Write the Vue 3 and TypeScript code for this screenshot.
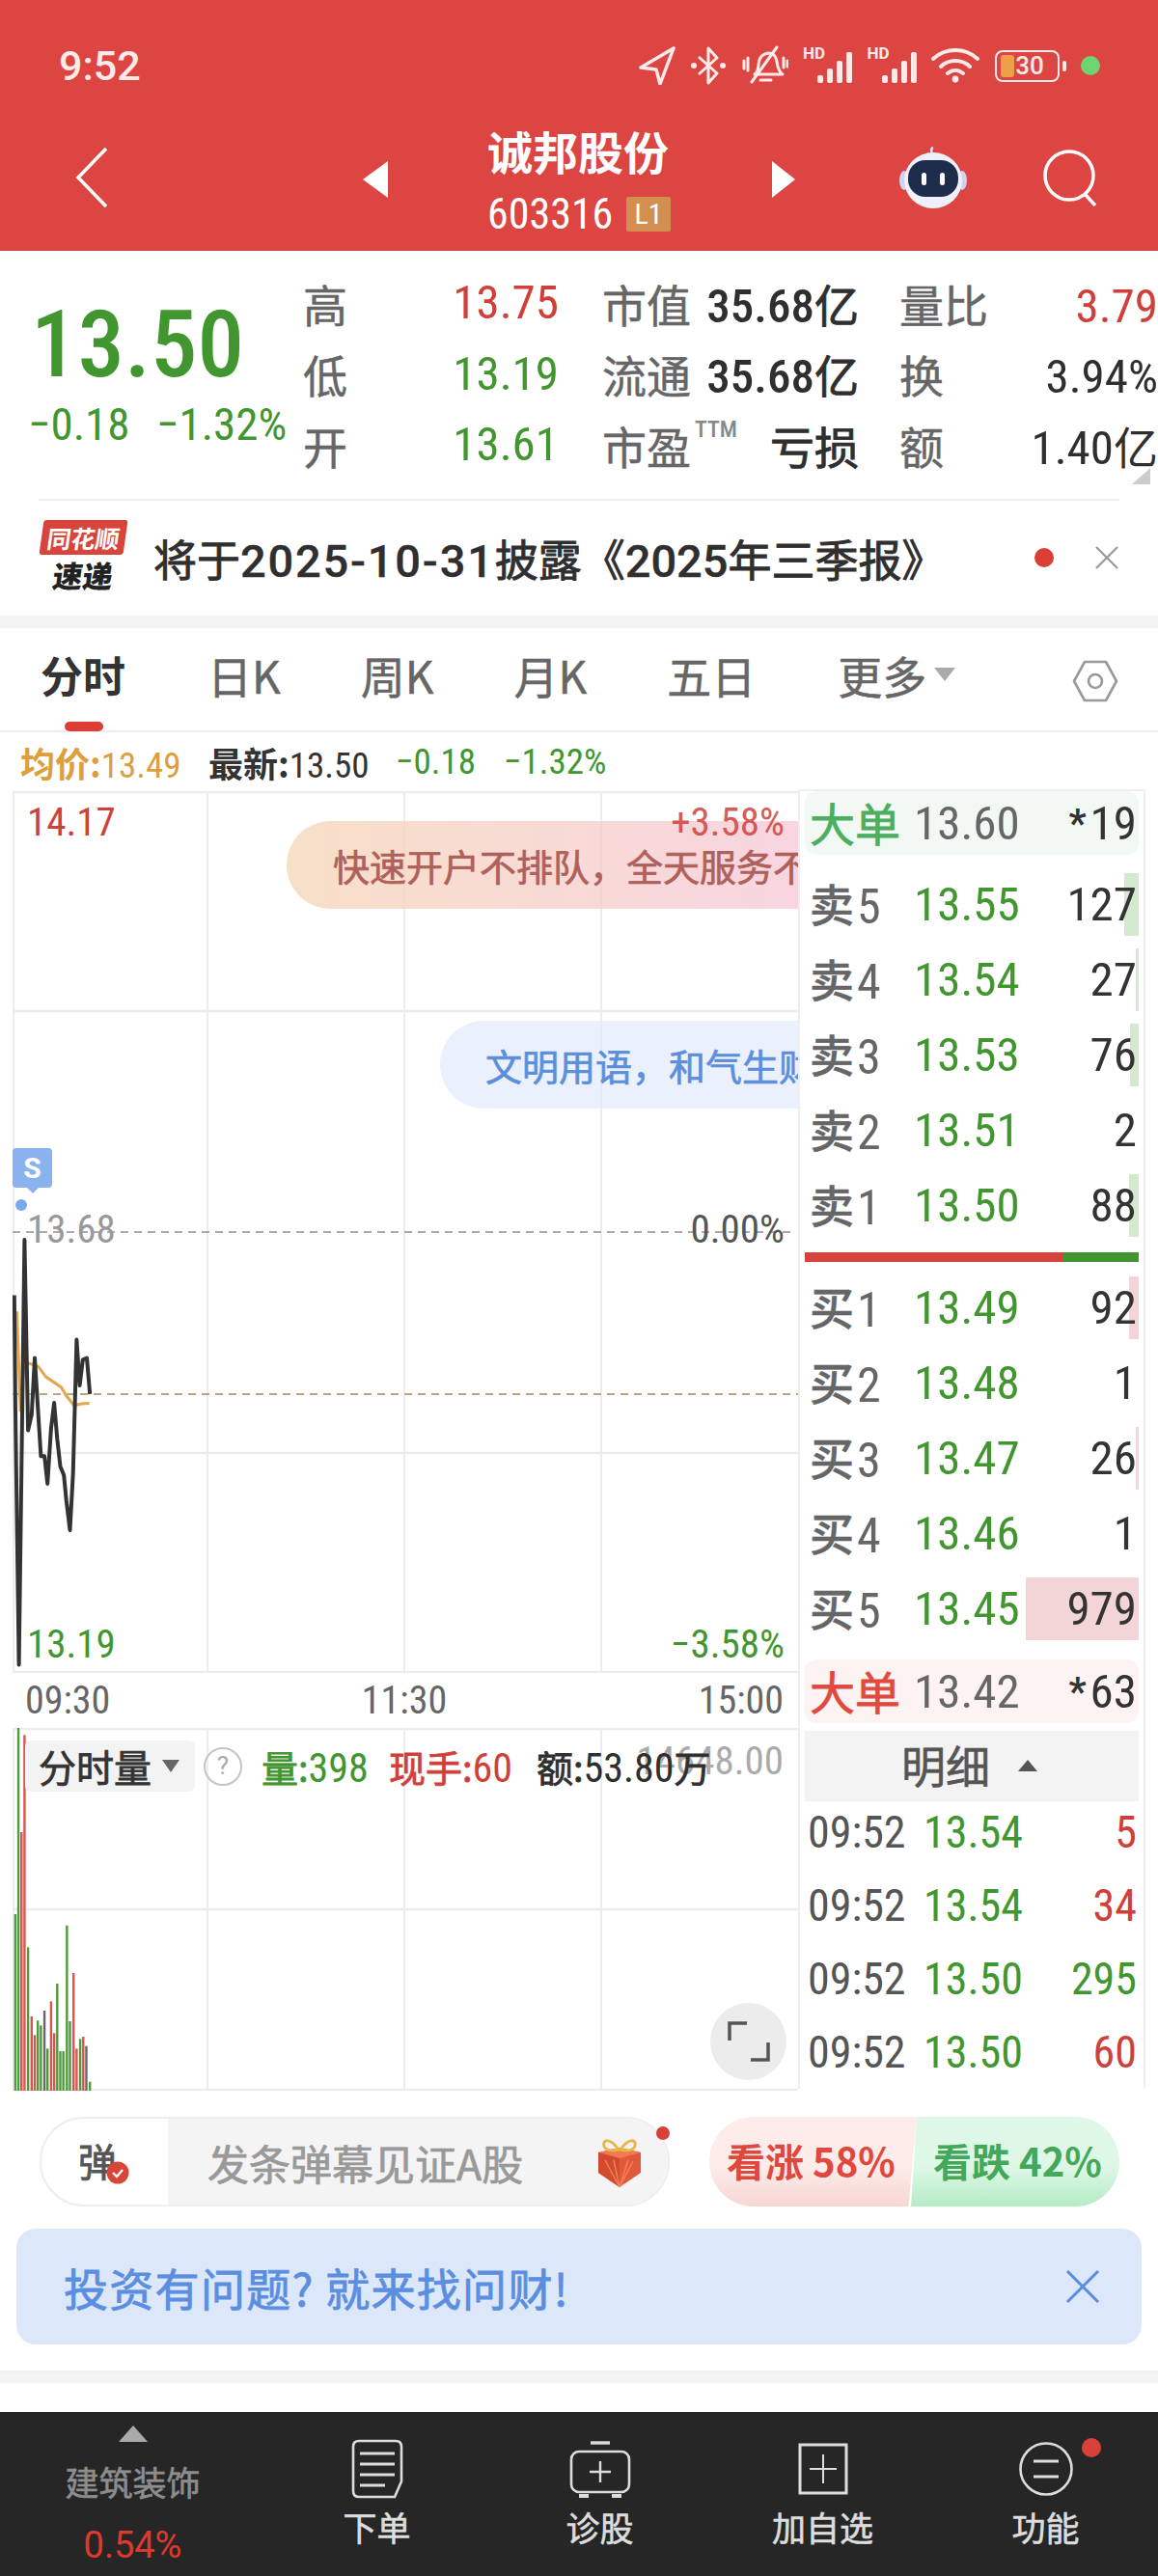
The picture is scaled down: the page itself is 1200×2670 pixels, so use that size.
<script setup lang="ts">
type Pt = [number, number]

const tabs = ['日K', '周K', '月K', '五日']

const stats = [
  { l1: '高', v1: '13.75', c1: 'red', l2: '市值', v2: '35.68', u2: '亿', l3: '量比', v3: '3.79', u3: '', c3: 'red' },
  { l1: '低', v1: '13.19', c1: 'green', l2: '流通', v2: '35.68', u2: '亿', l3: '换', v3: '3.94%', u3: '', c3: 'dark' },
  { l1: '开', v1: '13.61', c1: 'green', l2: '市盈', v2: '', u2: '亏损', l3: '额', v3: '1.40', u3: '亿', c3: 'dark' }
]

const asks = [
  { name: '卖', n: 5, price: '13.55', vol: '127', bar: 15 },
  { name: '卖', n: 4, price: '13.54', vol: '27', bar: 3 },
  { name: '卖', n: 3, price: '13.53', vol: '76', bar: 9 },
  { name: '卖', n: 2, price: '13.51', vol: '2', bar: 0 },
  { name: '卖', n: 1, price: '13.50', vol: '88', bar: 10 }
]
const bids = [
  { name: '买', n: 1, price: '13.49', vol: '92', bar: 10 },
  { name: '买', n: 2, price: '13.48', vol: '1', bar: 0 },
  { name: '买', n: 3, price: '13.47', vol: '26', bar: 3 },
  { name: '买', n: 4, price: '13.46', vol: '1', bar: 0 },
  { name: '买', n: 5, price: '13.45', vol: '979', bar: 117 }
]
const ticks = [
  { time: '09:52', price: '13.54', vol: '5', c: 'red' },
  { time: '09:52', price: '13.54', vol: '34', c: 'red' },
  { time: '09:52', price: '13.50', vol: '295', c: 'green' },
  { time: '09:52', price: '13.50', vol: '60', c: 'red' }
]

// traced from the reference, zoomed crop coordinates
const linePts: Pt[] = [[28,483],[30,800],[37,1555],[48,322],[55,875],[62,830],[68,665],[75,830],[80,950],[87,950],[93,1030],[100,870],[106,795],[112,900],[118,980],[125,1005],[130,1080],[137,1165],[143,1000],[150,612],[156,745],[162,670],[170,665],[176,770]]
const avgPts: Pt[] = [[33,530],[40,820],[46,700],[55,680],[75,690],[90,720],[120,750],[130,775],[145,803],[160,798],[175,797]]
const toPoints = (pts: Pt[]) => pts.map(([x, y]) => `${(x / 1.889).toFixed(1)},${(1170 + y / 2.8).toFixed(1)}`).join(' ')
const priceLine = toPoints(linePts)
const avgLine = toPoints(avgPts)

const bars: { x: number; top: number; c: string }[] = [
  [30,612,'g'],[36,30,'g'],[42,357,'r'],[48,55,'r'],[55,715,'g'],[62,930,'r'],[68,988,'r'],[74,943,'g'],[80,958,'g'],[87,912,'k'],[93,1030,'g'],[100,883,'r'],[106,982,'r'],[112,828,'g'],[118,1038,'g'],[124,1038,'g'],[131,647,'g'],[137,945,'g'],[144,795,'r'],[150,1030,'r'],[157,1000,'g'],[163,993,'r'],[169,1022,'k'],[176,1133,'g']
].map((b) => ({
  x: (b[0] as number) / 1.889,
  top: 1780 + (b[1] as number) / 3,
  c: b[2] === 'g' ? '#4f9a3c' : b[2] === 'r' ? '#d9534f' : '#666'
}))
</script>

<template>
  <div class="page">
    <header class="head">
      <div class="status">
        <span class="clock">9:52</span>
        <div class="status-icons">
          <svg width="38" height="40" viewBox="0 0 38 40"><path d="M36 2 2 22l16 2 4 15z" fill="none" stroke="#ffeaea" stroke-width="3.5" stroke-linejoin="round" /></svg>
          <svg width="38" height="42" viewBox="0 0 38 42"><path d="M9 12 28 29 19 39V3l9 10L9 30" fill="none" stroke="#ffeaea" stroke-width="3" stroke-linejoin="round" /><circle cx="4" cy="21" r="3" fill="#ffeaea" /><circle cx="34" cy="21" r="3" fill="#ffeaea" /></svg>
          <svg width="48" height="42" viewBox="0 0 48 42"><path d="M13 30c5-3 3-9 5-15 2-6 10-9 15-5 3 3 3 7 4 12 1 3 2 6 5 8zM19 36h11M36 2 10 38M2 16v8M6 13v13M43 13v10M47 16v6" fill="none" stroke="#ffeaea" stroke-width="3" stroke-linecap="round" stroke-linejoin="round" /></svg>
          <div class="signal"><span class="hd">HD</span><i style="height:8px" /><i style="height:15px" /><i style="height:23px" /><i style="height:32px" /></div>
          <div class="signal"><span class="hd">HD</span><i style="height:8px" /><i style="height:15px" /><i style="height:23px" /><i style="height:32px" /></div>
          <svg width="50" height="36" viewBox="0 0 50 36"><path d="M2 11c13-12 33-12 46 0M10 19c8-8 22-8 30 0M17 26c5-4 11-4 16 0" fill="none" stroke="#ffeaea" stroke-width="4" stroke-linecap="round" /><circle cx="25" cy="32" r="3.4" fill="#ffeaea" /></svg>
          <div class="battery"><div class="batt-body"><i class="batt-fill" /><span>30</span></div><i class="batt-cap" /></div>
          <i class="green-dot" />
        </div>
      </div>
      <nav class="nav">
        <svg class="back" width="36" height="64" viewBox="0 0 36 64"><path d="M33 2 4 32l29 30" fill="none" stroke="#fff" stroke-width="3.5" /></svg>
        <div class="nav-mid">
          <i class="tri tri-l" />
          <div class="stock">
            <div class="stock-name">诚邦股份</div>
            <div class="stock-code"><span class="num">603316</span><b class="l1">L1</b></div>
          </div>
          <i class="tri tri-r" />
        </div>
        <div class="nav-right">
          <svg width="72" height="66" viewBox="0 0 72 66">
            <path d="M36 10c-2-3-3-7 0-8" fill="none" stroke="#dfe3f7" stroke-width="2.5" />
            <ellipse cx="6" cy="36" rx="5" ry="10" fill="#cfd3f2" />
            <ellipse cx="66" cy="36" rx="5" ry="10" fill="#cfd3f2" />
            <ellipse cx="36" cy="36" rx="30" ry="29" fill="#eef0fb" />
            <rect x="10" y="15" width="52" height="38" rx="18" fill="#1f2d4d" />
            <rect x="24" y="28" width="5" height="13" rx="2.5" fill="#fff" />
            <rect x="43" y="28" width="5" height="13" rx="2.5" fill="#fff" />
          </svg>
          <svg width="60" height="60" viewBox="0 0 60 60"><circle cx="28" cy="28" r="25" fill="none" stroke="#fff" stroke-width="3.5" /><path d="m44 47 11 12" stroke="#fff" stroke-width="3.5" /></svg>
        </div>
      </nav>
    </header>

    <section class="quote">
      <div class="quote-top">
        <div class="last">
          <div class="last-price num">13.50</div>
          <div class="last-chg num"><span class="chg-a">−0.18</span><span>−1.32%</span></div>
        </div>
        <div class="stats">
          <template v-for="row in stats" :key="row.l1">
            <span class="s-label">{{ row.l1 }}</span>
            <span class="s-val num" :class="row.c1">{{ row.v1 }}</span>
            <span class="s-label s-l2">{{ row.l2 }}</span>
            <span class="s-val s-v2"><sup v-if="!row.v2" class="ttm num">TTM</sup><span class="num">{{ row.v2 }}</span>{{ row.u2 }}</span>
            <span class="s-label s-l3">{{ row.l3 }}</span>
            <span class="s-val" :class="row.c3"><span class="num">{{ row.v3 }}</span>{{ row.u3 }}</span>
          </template>
        </div>
        <i class="corner" />
      </div>
      <div class="notice">
        <div class="logo">
          <div class="logo-top">同花顺</div>
          <div class="logo-bot">速递</div>
        </div>
        <div class="notice-text">将于<span class="date">2025-10-31</span>披露《<span>2025</span>年三季报》</div>
        <i class="notice-dot" />
        <svg width="26" height="24" viewBox="0 0 26 24"><path d="m2 1 22 22M24 1 2 23" stroke="#999" stroke-width="2.2" /></svg>
      </div>
    </section>
    <div class="band" />

    <div class="tabs">
      <span class="tab active">分时</span>
      <span v-for="t in tabs" :key="t" class="tab">{{ t }}</span>
      <span class="tab more">更多<i class="more-tri" /></span>
      <svg class="hex" width="48" height="46" viewBox="0 0 48 46"><path d="M13 3h22l11 20-11 20H13L2 23z" fill="none" stroke="#999" stroke-width="2.6" stroke-linejoin="round" /><circle cx="24" cy="23" r="7" fill="none" stroke="#999" stroke-width="2.6" /></svg>
    </div>

    <div class="info num">
      <span class="avg"><b>均价:</b>13.49</span>
      <span class="latest"><b>最新:</b>13.50</span>
      <span class="green">−0.18</span>
      <span class="green">−1.32%</span>
    </div>

    <main class="main">
      <div class="charts">
        <div class="price-chart">
          <svg class="plot" viewBox="13 820 815 914" width="815" height="914">
            <g stroke="#e8e8e8" stroke-width="1.5">
              <path d="M14 820v914M215 820v914M419 820v914M623 820v914" />
            </g>
            <g stroke="#ececec" stroke-width="2.5">
              <path d="M13 821h815M13 1048h815M13 1506h815M13 1733h815" />
            </g>
            <path d="M13 1277h812" stroke="#aaa" stroke-width="2" stroke-dasharray="8 6" />
            <path d="M13 1445h815" stroke="#bda67f" stroke-width="2" stroke-dasharray="8 6" />
            <polyline :points="avgLine" fill="none" stroke="#e0a84f" stroke-width="3" />
            <polyline :points="priceLine" fill="none" stroke="#333" stroke-width="4" stroke-linejoin="round" />
            <circle cx="22" cy="1249" r="6" fill="#7ba9ee" />
          </svg>
          <div class="bullet b-red">快速开户不排队，全天服务不</div>
          <div class="bullet b-blue">文明用语，和气生财</div>
          <span class="lab num red" style="left:15px;top:10px">14.17</span>
          <span class="lab lab-r num red soft" style="top:10px">+3.58%</span>
          <span class="lab num grey" style="left:15px;top:432px">13.68</span>
          <span class="lab lab-r num mid" style="top:432px">0.00%</span>
          <span class="lab num green" style="left:15px;top:862px">13.19</span>
          <span class="lab lab-r num green" style="top:862px">−3.58%</span>
          <div class="s-tag">S</div>
        </div>
        <div class="time-axis num"><span>09:30</span><span>11:30</span><span>15:00</span></div>
        <div class="vol-chart">
          <svg class="plot" viewBox="13 1791 815 376" width="815" height="376">
            <path d="M14 1791v376M215 1791v376M419 1791v376M623 1791v376" stroke="#e8e8e8" stroke-width="1.5" />
            <path d="M13 1792h815M13 1979h815M13 2166h815" stroke="#ececec" stroke-width="2.5" />
            <rect v-for="b in bars" :key="b.x" :x="b.x - 1.2" :y="b.top" width="2.4" :height="2167 - b.top" :fill="b.c" />
          </svg>
          <span class="vol-max num">14648.00</span>
          <div class="vol-head">
            <div class="vol-tag">分时量<i class="vol-tri" /></div>
            <span class="q-mark">?</span>
            <span class="vol-item vi-a green"><b>量:</b><span class="num">398</span></span>
            <span class="vol-item vi-b red"><b>现手:</b><span class="num">60</span></span>
            <span class="vol-item dark"><b>额:</b><span class="num">53.80</span><b>万</b></span>
          </div>
          <div class="expand">
            <svg width="44" height="42" viewBox="0 0 44 42"><path d="M2 20V2h18M42 22v18H24" fill="none" stroke="#555" stroke-width="3.5" /></svg>
          </div>
        </div>
      </div>

      <aside class="book">
        <div class="big big-green"><b>大单</b><span class="num b-price">13.60</span><span class="num b-vol"><em>*</em>19</span></div>
        <div class="levels">
          <div v-for="r in asks" :key="r.name + r.n" class="level">
            <i v-if="r.bar" class="lv-bar bar-g" :style="{ width: r.bar + 'px' }" />
            <span class="lv-name">{{ r.name }}<span class="num">{{ r.n }}</span></span>
            <span class="num green lv-price">{{ r.price }}</span>
            <span class="num lv-vol">{{ r.vol }}</span>
          </div>
        </div>
        <div class="ratio"><i class="ratio-red" /><i class="ratio-green" /></div>
        <div class="levels levels-bid">
          <div v-for="r in bids" :key="r.name + r.n" class="level">
            <i v-if="r.bar" class="lv-bar bar-r" :style="{ width: r.bar + 'px' }" />
            <span class="lv-name">{{ r.name }}<span class="num">{{ r.n }}</span></span>
            <span class="num green lv-price">{{ r.price }}</span>
            <span class="num lv-vol">{{ r.vol }}</span>
          </div>
        </div>
        <div class="big big-red"><b>大单</b><span class="num b-price">13.42</span><span class="num b-vol"><em>*</em>63</span></div>
        <div class="detail-head">明细<i class="detail-tri" /></div>
        <div class="ticks">
          <div v-for="(t, i) in ticks" :key="i" class="tick num">
            <span class="t-time">{{ t.time }}</span>
            <span class="green t-price">{{ t.price }}</span>
            <span class="t-vol" :class="t.c">{{ t.vol }}</span>
          </div>
        </div>
      </aside>
    </main>

    <div class="actions">
      <div class="danmu">
        <div class="danmu-left">
          <span>弹</span>
          <svg class="danmu-check" width="24" height="24" viewBox="0 0 24 24"><circle cx="12" cy="12" r="11.5" fill="#d8463a" /><path d="m7 12 4 4 6-7" fill="none" stroke="#fff" stroke-width="2.4" /></svg>
        </div>
        <div class="danmu-input">
          <span>发条弹幕见证A股</span>
          <svg width="50" height="52" viewBox="0 0 50 52">
            <path d="M3 16 25 11l22 5v21L25 52 3 37z" fill="#e2583a" />
            <path d="M3 16l22 6 22-6-22-5z" fill="#f07a52" />
            <path d="M25 22v30L3 37V16z" fill="#d44a2e" />
            <path d="M25 52 10 24M25 52l-6-28M25 52l9-28M25 52l14-27" stroke="#ef8158" stroke-width="1.5" />
            <path d="M24 13c-9-13-17-10-15-4 1 5 9 6 15 4zM26 13c9-13 17-10 15-4-1 5-9 6-15 4z" fill="none" stroke="#e8b548" stroke-width="3" />
          </svg>
        </div>
        <i class="danmu-dot" />
      </div>
      <div class="vote">
        <div class="vote-up">看涨 58%</div>
        <div class="vote-down">看跌 42%</div>
      </div>
    </div>

    <div class="wencai">
      <span>投资有问题? 就来找问财!</span>
      <svg width="36" height="34" viewBox="0 0 36 34"><path d="m2 1 32 32M34 1 2 33" stroke="#5b8ee0" stroke-width="3" /></svg>
    </div>
    <div class="band band-low" />

    <footer class="foot">
      <div class="foot-sector">
        <i class="foot-tri" />
        <span class="foot-name">建筑装饰</span>
        <span class="foot-pct num">0.54%</span>
      </div>
      <div class="foot-item">
        <div class="foot-icon"><svg width="54" height="62" viewBox="0 0 54 62"><path d="M8 2h38q6 0 6 6v36l-7 16H8q-6 0-6-6V8q0-6 6-6z" fill="none" stroke="#ddd" stroke-width="2.6" /><path d="M9 15h36M9 26h36M9 37h36M9 48h26" stroke="#ddd" stroke-width="3" /></svg></div>
        <span>下单</span>
      </div>
      <div class="foot-item">
        <div class="foot-icon"><svg width="64" height="60" viewBox="0 0 64 60"><path d="M22 3h20" stroke="#ddd" stroke-width="3.4" /><rect x="2" y="12" width="60" height="42" rx="8" fill="none" stroke="#ddd" stroke-width="2.6" /><path d="M32 22v22M21 33h22" stroke="#ddd" stroke-width="2.4" /><path d="M10 56h10v4H10zM44 56h10v4H44z" fill="#ddd" /></svg></div>
        <span>诊股</span>
      </div>
      <div class="foot-item">
        <div class="foot-icon"><svg width="52" height="54" viewBox="0 0 52 54"><rect x="2" y="2" width="48" height="50" fill="none" stroke="#ddd" stroke-width="3" /><path d="M26 12v30M12 27h28" stroke="#ddd" stroke-width="2" /></svg></div>
        <span>加自选</span>
      </div>
      <div class="foot-item foot-fn">
        <div class="foot-icon"><svg width="56" height="60" viewBox="0 0 56 60"><circle cx="28" cy="30" r="26.5" fill="none" stroke="#ddd" stroke-width="2.6" /><path d="M15 22h26M15 38h26" stroke="#ddd" stroke-width="3" /></svg></div>
        <span>功能</span>
        <i class="foot-dot" />
      </div>
    </footer>
  </div>
</template>

<style scoped>
.page {
  width: 1200px;
  height: 2670px;
  overflow: hidden;
  background: #fff;
  display: flex;
  flex-direction: column;
  font-family: "Noto Sans CJK SC", "Liberation Sans", sans-serif;
  color: #333;
}
.num { font-family: Roboto, "Noto Sans CJK SC", sans-serif; font-stretch: 75%; -webkit-text-stroke: 0; }
.red { color: #d0403a; }
.green { color: #41962f; }
.dark { color: #2f2f2f; }
.grey { color: #999; }
.mid { color: #555; }
b, em, i { font-style: normal; }

/* header */
.head { height: 260px; background: #dc4541; color: #fff; flex: none; }
.status { height: 122px; padding: 14px 60px 0 61px; display: flex; align-items: center; justify-content: space-between; box-sizing: border-box; }
.clock { font: 500 43px Roboto, sans-serif; color: #ffeaea; }
.status-icons { display: flex; align-items: center; gap: 15.5px; }
.signal { display: flex; align-items: flex-end; gap: 4px; position: relative; width: 51px; height: 36px; justify-content: flex-end; }
.signal i { width: 6px; background: #ffeaea; border-radius: 2px; }
.hd { position: absolute; left: 0; top: -5px; font: 700 17px Roboto, sans-serif; color: #ffeaea; }
.battery { display: flex; align-items: center; gap: 3px; }
.batt-body { width: 67px; height: 33px; border: 2.5px solid #ffeaea; border-radius: 8px; box-sizing: border-box; position: relative; display: flex; align-items: center; justify-content: center; font: 500 26px Roboto, sans-serif; color: #ffeaea; }
.batt-fill { position: absolute; left: 4px; top: 3px; bottom: 3px; width: 14px; background: #eda047; border-radius: 3px; }
.batt-body span { position: relative; left: 3px; }
.batt-cap { width: 4px; height: 11px; background: #ffeaea; border-radius: 2px; }
.green-dot { width: 20px; height: 20px; border-radius: 50%; background: #6fd46f; }

.nav { height: 138px; padding: 0 60px; display: grid; grid-template-columns: 1fr auto 1fr; align-items: center; }
.back { margin-left: 17px; margin-top: -14px; }
.nav-mid { display: flex; align-items: center; gap: 103px; }
.tri { width: 0; height: 0; border-top: 19px solid transparent; border-bottom: 19px solid transparent; margin-top: -10px; }
.tri-l { border-right: 26px solid #fff; }
.tri-r { border-left: 24px solid #fff; }
.stock { width: 192px; display: flex; flex-direction: column; gap: 22px; margin-top: -12px; }
.stock-name { font-size: 47px; line-height: 52px; font-weight: 700; white-space: nowrap; }
.stock-code { display: flex; align-items: center; justify-content: space-between; font-size: 44px; line-height: 36px; padding-right: 2px; }
.l1 { width: 46px; height: 36px; background: #d38f4f; font: 400 30px/36px Roboto, sans-serif; font-stretch: 75%; text-align: center; border-radius: 2px; }
.nav-right { display: flex; justify-content: flex-end; align-items: center; gap: 77px; margin-top: -14px; }

/* quote */
.quote { height: 378px; flex: none; box-sizing: border-box; display: flex; flex-direction: column; }
.quote-top { position: relative; height: 258px; padding-top: 17px; box-sizing: border-box; display: flex; }
.last { width: 314px; flex: none; padding-left: 29px; box-sizing: border-box; }
.last-price { font-size: 97px; line-height: 110px; margin: 25px 0 0 3px; color: #41962f; white-space: nowrap; font-weight: 500; }
.last-chg { display: flex; font-size: 47px; line-height: 56px; color: #41962f; white-space: nowrap; }
.chg-a { width: 133px; flex: none; }
.stats { display: grid; grid-template-columns: 46px 219px 138px 173px 132px 178px; grid-auto-rows: 73.5px; align-items: center; }
.s-label { font-size: 46px; color: #666; white-space: nowrap; -webkit-text-stroke: .5px #666; }
.s-l2 { padding-left: 45px; }
.s-l3 { padding-left: 42px; }
.s-val { font-size: 46px; text-align: right; white-space: nowrap; }
.s-val.num, .s-val .num { font-size: 49px; font-weight: 450; }
.s-v2 { color: #2f2f2f; position: relative; -webkit-text-stroke: .9px #2f2f2f; }
.s-v2 .num { font-weight: 500; }
.s-v2 .ttm { position: absolute; left: 3px; top: 2px; font-size: 24px; color: #888; vertical-align: baseline; line-height: 30px; }
.corner { position: absolute; right: 8px; bottom: 15px; width: 0; height: 0; border-bottom: 17px solid #ccc; border-left: 19px solid transparent; }
.notice { margin: 0 40px; height: 120px; border-top: 2px solid #eee; display: flex; align-items: center; }
.logo { width: 88px; margin-left: 2px; flex: none; display: flex; flex-direction: column; align-items: center; position: relative; top: -3px; }
.logo-top { width: 87px; height: 36px; background: #d8433c; border-radius: 3px; color: #fff; font-size: 25px; line-height: 36px; font-weight: 700; text-align: center; transform: skewX(-8deg); white-space: nowrap; }
.logo-bot { font-size: 31px; line-height: 32px; font-weight: 900; color: #222; transform: skewX(-8deg); margin-top: 5px; }
.notice-text { font-size: 45px; -webkit-text-stroke: .9px #2f2f2f; color: #2f2f2f; margin-left: 29px; white-space: nowrap; flex: 1; }
.notice-text span { font: 500 47px Roboto, sans-serif; -webkit-text-stroke: .3px #2f2f2f; }
.notice-text .date { letter-spacing: 1.8px; }
.notice-dot { width: 20px; height: 20px; border-radius: 50%; background: #dc3e35; margin-right: 42px; }
.band { height: 13px; background: #f4f4f4; flex: none; }

/* tabs */
.tabs { height: 108px; flex: none; box-sizing: border-box; border-bottom: 2px solid #eee; padding-left: 42px; display: flex; align-items: center; gap: 83px; position: relative; }
.tab { font-size: 46px; line-height: 60px; color: #666; position: relative; margin-top: -10px; white-space: nowrap; -webkit-text-stroke: .5px #666; }
.tab.active { color: #333; font-weight: 700; -webkit-text-stroke: 0; font-size: 44px; margin-right: 2px; }
.tab.active::after { content: ""; position: absolute; left: 25px; bottom: -29px; width: 40px; height: 10px; background: #dc3e35; border-radius: 5px; }
.more { display: flex; align-items: center; gap: 8px; margin-left: 2px; }
.more-tri { width: 0; height: 0; border-left: 11px solid transparent; border-right: 11px solid transparent; border-top: 14px solid #aaa; }
.hex { position: absolute; left: 1111px; top: 32px; }
.info { height: 61px; flex: none; box-sizing: border-box; padding-left: 21px; display: flex; align-items: center; font-size: 37px; white-space: nowrap; }
.info b { font: 700 36px "Noto Sans CJK SC", sans-serif; }
.avg { color: #dc9f3c; width: 195px; }
.latest { color: #333; width: 194px; }
.info .green { width: 112px; }

/* main */
.main { height: 1347px; flex: none; display: flex; padding-left: 13px; }
.charts { width: 814px; flex: none; }
.price-chart { position: relative; width: 814px; height: 914px; overflow: hidden; }
.plot { position: absolute; left: 0; top: 0; display: block; }
.lab { position: absolute; font-size: 41px; line-height: 44px; white-space: nowrap; }
.lab-r { right: 14px; }
.soft { opacity: .85; }
.bullet { position: absolute; height: 91px; line-height: 91px; font-size: 38px; white-space: nowrap; border-radius: 46px 0 0 46px; right: 0; box-sizing: border-box; overflow: hidden; }
.b-red { top: 31px; left: 284px; padding-left: 48px; background: linear-gradient(90deg, rgba(246, 215, 186, .8), rgba(244, 190, 208, .65)); color: #b0605a; -webkit-text-stroke: .7px #b0605a; }
.b-blue { top: 238px; left: 443px; padding-left: 47px; background: rgba(222, 234, 250, .65); color: #5b8fdc; -webkit-text-stroke: .7px #5b8fdc; }
.s-tag { position: absolute; left: 0; top: 370px; width: 41px; height: 41px; background: #8ab2ee; border-radius: 4px; color: #fff; font: 700 30px/41px Roboto, sans-serif; text-align: center; }
.s-tag::after { content: ""; position: absolute; left: 15px; top: 41px; border-left: 6px solid transparent; border-right: 6px solid transparent; border-top: 6px solid #8ab2ee; }
.time-axis { height: 57px; display: flex; justify-content: space-between; align-items: center; padding: 0 15px 0 13px; font-size: 40px; color: #666; }
.vol-chart { position: relative; width: 814px; height: 376px; overflow: hidden; }
.vol-head { position: absolute; left: 13px; top: 12px; display: flex; align-items: center; white-space: nowrap; }
.vol-tag { width: 176px; height: 53px; background: #f3f3f3; border-radius: 6px; box-sizing: border-box; padding-left: 14px; font-size: 39px; line-height: 53px; color: #333; display: flex; align-items: center; gap: 11px; -webkit-text-stroke: .8px #333; }
.vol-tri { width: 0; height: 0; border-left: 9px solid transparent; border-right: 9px solid transparent; border-top: 13px solid #666; }
.q-mark { width: 40px; height: 40px; margin-left: 9px; border: 2.5px solid #c4c4c4; border-radius: 50%; box-sizing: border-box; text-align: center; font: 400 26px/35px Roboto, sans-serif; color: #aaa; }
.vol-item { font-size: 38px; margin-left: 20px; }
.vol-item + .vol-item { margin-left: 0; }
.vol-item .num { font-size: 42px; }
.vi-a { width: 132px; flex: none; }
.vi-b { width: 153px; flex: none; }
.vol-item b { font-size: 38px; font-weight: 400; -webkit-text-stroke: .8px currentColor; }
.vol-max { position: absolute; right: 15px; top: 10px; font-size: 41px; color: #aaa; }
.expand { position: absolute; left: 723px; top: 285px; width: 79px; height: 80px; border-radius: 50%; background: #ececec; display: flex; align-items: center; justify-content: center; }

/* order book */
.book { width: 360px; flex: none; box-sizing: border-box; border-left: 2px solid #eee; border-right: 2px solid #eee; border-top: 2px solid #eee; padding: 0 5px; height: 1347px; margin-top: -2px; }
.big { height: 66px; border-radius: 12px; display: flex; align-items: center; position: relative; padding: 0 2px 0 5px; font-size: 49px; font-weight: 450; }
.big b { font-size: 47px; font-weight: 400; -webkit-text-stroke: .8px currentColor; width: 108px; flex: none; position: relative; top: -2px; }
.big-green { background: #f2f9f4; }
.big-green b { color: #4cae5f; }
.big-red { background: #fdf3f3; margin-top: 14px; }
.big-red b { color: #e04a3e; }
.b-price { color: #666; }
.b-vol { margin-left: auto; color: #333; }
.b-vol em { font-size: 40px; font-weight: 700; margin-right: 4px; position: relative; top: -3px; }
.levels { margin-top: 12px; }
.levels-bid { margin-top: 8px; }
.level { height: 78px; display: flex; align-items: center; position: relative; padding: 0 2px 0 5px; font-size: 49px; font-weight: 450; }
.lv-bar { position: absolute; right: 0; top: 7px; height: 65px; }
.bar-g { background: #d4e9d0; }
.bar-r { background: #f3d5d7; }
.lv-name { width: 108px; flex: none; color: #666; font-size: 46px; position: relative; top: -2px; white-space: nowrap; -webkit-text-stroke: .5px #666; }
.lv-name .num { font-size: 50px; margin-left: 3px; position: relative; top: 2px; }
.lv-price { position: relative; }
.lv-vol { margin-left: auto; position: relative; color: #333; }
.ratio { height: 10px; margin-top: 10px; display: flex; }
.ratio-red { width: 268px; background: #d5443c; }
.ratio-green { flex: 1; background: #41962f; }
.detail-head { height: 73px; margin-top: 8px; background: #f3f3f3; font-size: 46px; line-height: 68px; color: #555; position: relative; padding-left: 100px; -webkit-text-stroke: .6px #555; }
.detail-tri { position: absolute; left: 221px; top: 30px; width: 0; height: 0; border-left: 10px solid transparent; border-right: 10px solid transparent; border-bottom: 12px solid #555; }
.ticks { margin-top: -6px; }
.tick { height: 76px; display: flex; align-items: center; font-size: 46px; font-weight: 450; padding: 0 2px 0 3px; white-space: nowrap; }
.t-time { width: 120px; flex: none; color: #555; }
.t-vol { margin-left: auto; }

/* actions */
.actions { flex: none; padding: 27px 40px 0 41px; display: flex; justify-content: space-between; }
.danmu { width: 653px; height: 93px; border: 2px solid #eee; border-radius: 46px; box-sizing: border-box; display: flex; position: relative; }
.danmu-left { width: 131px; flex: none; border-radius: 46px 0 0 46px; position: relative; font-size: 40px; color: #555; padding: 14px 0 0 38px; box-sizing: border-box; -webkit-text-stroke: .8px #555; }
.danmu-check { position: absolute; left: 67px; top: 44px; }
.danmu-input { flex: 1; background: #f4f4f4; border-radius: 0 46px 46px 0; display: flex; align-items: center; padding-left: 41px; gap: 75px; font-size: 43px; color: #999; white-space: nowrap; -webkit-text-stroke: .7px #999; }
.danmu-dot { position: absolute; right: -2px; top: 8px; width: 14px; height: 14px; border-radius: 50%; background: #d8403a; }
.vote { width: 425px; height: 93px; border-radius: 46px; overflow: hidden; display: flex; font-size: 40px; font-weight: 700; white-space: nowrap; }
.vote-up { width: 215px; flex: none; background: linear-gradient(#fdecea 55%, #f6d6d2); color: #e0483d; line-height: 90px; padding-left: 18px; box-sizing: border-box; clip-path: polygon(0 0, 100% 0, 96% 100%, 0 100%); }
.vote-down { width: 216px; flex: none; margin-left: -6px; background: linear-gradient(#dff7e6 55%, #b4ecc5); color: #44a85b; line-height: 90px; padding-left: 23px; box-sizing: border-box; clip-path: polygon(6px 0, 100% 0, 100% 100%, 0 100%); }
.wencai { flex: none; height: 120px; margin: 23px 17px 0; background: #dce8fa; border-radius: 20px; display: flex; align-items: center; justify-content: space-between; padding: 0 43px 0 49px; font-size: 46px; letter-spacing: 1.3px; color: #5b8ee0; -webkit-text-stroke: .8px #5b8ee0; }
.band-low { margin-top: 27px; }

/* footer */
.foot { margin-top: 30px; height: 170px; flex: none; background: #262626; display: grid; grid-template-columns: 275px repeat(4, 231px); color: #ddd; }
.foot-sector { display: flex; flex-direction: column; align-items: center; padding-top: 14px; }
.foot-tri { width: 0; height: 0; border-left: 15px solid transparent; border-right: 15px solid transparent; border-bottom: 17px solid #aaa; }
.foot-name { font-size: 35px; line-height: 40px; color: #8d8d8d; margin-top: 21px; -webkit-text-stroke: .6px #8d8d8d; }
.foot-pct { font-size: 38px; line-height: 40px; color: #e0392b; margin-top: 26px; font-stretch: 100%; }
.foot-item { display: flex; flex-direction: column; align-items: center; padding-top: 28px; font-size: 35px; position: relative; -webkit-text-stroke: .6px #ddd; }
.foot-icon { height: 62px; display: flex; align-items: center; }
.foot-item span { margin-top: 11px; line-height: 36px; }
.foot-fn .foot-dot { position: absolute; left: 153px; top: 27px; width: 20px; height: 20px; border-radius: 50%; background: #d8403a; }
</style>

<style>
html, body { margin: 0; padding: 0; background: #fff; }
</style>
